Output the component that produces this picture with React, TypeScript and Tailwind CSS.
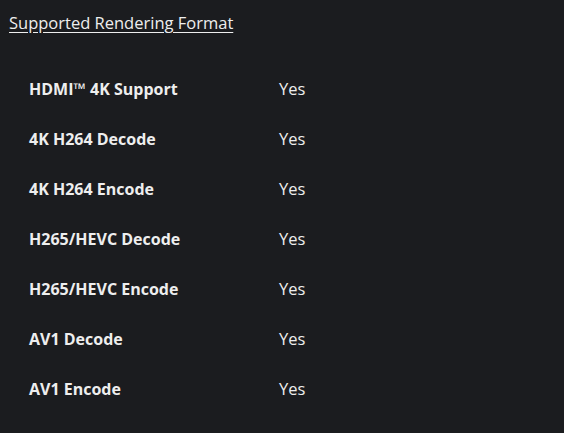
import React from "react";

const rows: [string, string][] = [
  ["HDMI™ 4K Support", "Yes"],
  ["4K H264 Decode", "Yes"],
  ["4K H264 Encode", "Yes"],
  ["H265/HEVC Decode", "Yes"],
  ["H265/HEVC Encode", "Yes"],
  ["AV1 Decode", "Yes"],
  ["AV1 Encode", "Yes"],
];

export default function App() {
  return (
    <div
      className="w-[564px] h-[433px] bg-[#1b1c1f] text-[#eeeeee] overflow-hidden"
      style={{ fontFamily: '"Open Sans", "Noto Sans", sans-serif' }}
    >
      <div className="pl-[9px] pt-[11px]">
        <h2 className="text-[16.5px] font-medium leading-[24px] underline underline-offset-[3px]">
          Supported Rendering Format
        </h2>
      </div>
      <div className="pt-[42px] pl-[29px] flex flex-col gap-[26px]">
        {rows.map(([k, v]) => (
          <div key={k} className="flex text-[16px] leading-[24px]">
            <div className="w-[250px] font-bold">{k}</div>
            <div className="font-normal text-[16.5px] text-[#eeeeee]">{v}</div>
          </div>
        ))}
      </div>
    </div>
  );
}
